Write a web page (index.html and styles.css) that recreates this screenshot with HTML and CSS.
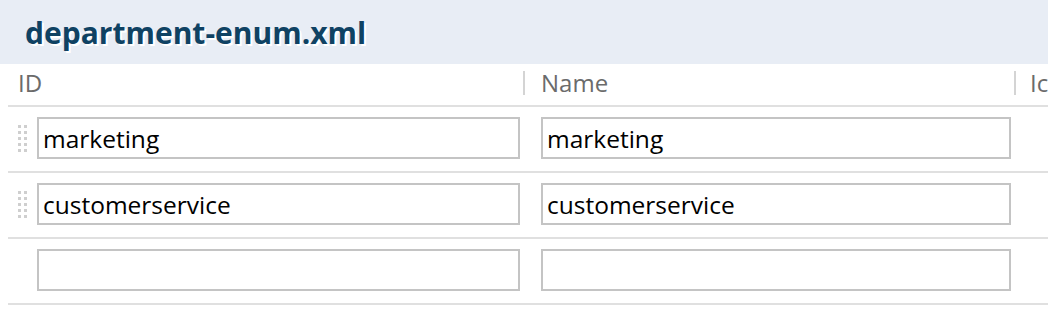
FILE: index.html
```html
<!DOCTYPE html>
<html lang="en">
<head>
  <meta charset="UTF-8" />
  <title>department-enum.xml</title>
  <link rel="stylesheet" href="styles.css">
</head>
<body>
  <div class="title-bar">
    <h1>department-enum.xml</h1>
  </div>

  <div class="enum-table">
    <div class="head-row">
      <div class="head-cell first">ID</div>
      <div class="head-cell second">Name</div>
      <div class="head-cell third">Icon</div>
    </div>

    <div class="row">
      <div class="handle"><span></span><span></span><span></span><span></span><span></span><span></span><span></span><span></span><span></span><span></span></div>
      <div class="cell first"><input type="text" value="marketing"></div>
      <div class="cell second"><input type="text" value="marketing"></div>
    </div>

    <div class="row">
      <div class="handle"><span></span><span></span><span></span><span></span><span></span><span></span><span></span><span></span><span></span><span></span></div>
      <div class="cell first"><input type="text" value="customerservice"></div>
      <div class="cell second"><input type="text" value="customerservice"></div>
    </div>

    <div class="row">
      <div class="handle empty"></div>
      <div class="cell first"><input type="text" value=""></div>
      <div class="cell second"><input type="text" value=""></div>
    </div>
  </div>
</body>
</html>
```

FILE: styles.css
```css
* {
  margin: 0;
  padding: 0;
  box-sizing: border-box;
}

body {
  background: #fff;
  font-family: 'Open Sans', 'Noto Sans', sans-serif;
  overflow: hidden;
  width: 1048px;
}

.title-bar {
  background: #e8edf5;
  height: 64px;
  padding: 13px 0 0 25px;
}

.title-bar h1 {
  font-family: 'Open Sans', sans-serif;
  font-weight: 700;
  font-size: 30px;
  line-height: 40px;
  color: #0f4263;
  text-shadow: 2px 2px 0 #fff;
}

.enum-table {
  margin-left: 8px;
  width: 1100px;
}

.head-row {
  display: flex;
  height: 43px;
  border-bottom: 2px solid #e0e0e0;
  padding-bottom: 4px;
  align-items: center;
}

.head-cell {
  font-size: 24px;
  color: #6b6b6b;
  line-height: 24px;
  height: 24px;
}

.head-cell.first {
  width: 517px;
  padding-left: 10px;
  border-right: 2px solid #d4d4d4;
}

.head-cell.second {
  width: 491px;
  padding-left: 16px;
  border-right: 2px solid #d4d4d4;
}

.head-cell.third {
  padding-left: 14px;
}

.row {
  display: flex;
  align-items: center;
  height: 66px;
  border-bottom: 2px solid #e0e0e0;
  padding-bottom: 2px;
}

.handle {
  width: 29px;
  display: grid;
  grid-template-columns: 3px 3px;
  column-gap: 3px;
  row-gap: 3px;
  padding-left: 10px;
  align-content: center;
}

.handle span {
  width: 3px;
  height: 3px;
  background: #cfcfcf;
}

.cell.first {
  width: 488px;
}

.cell.second {
  width: 491px;
  padding-left: 16px;
}

.cell input {
  display: block;
  height: 42px;
  border: 2px solid #c4c4c4;
  padding: 0 4px;
  font-family: 'Open Sans', 'Noto Sans', sans-serif;
  font-size: 24.5px;
  color: #000;
  background: #fff;
  outline: none;
}

.cell.first input {
  width: 483px;
}

.cell.second input {
  width: 470px;
}
```
